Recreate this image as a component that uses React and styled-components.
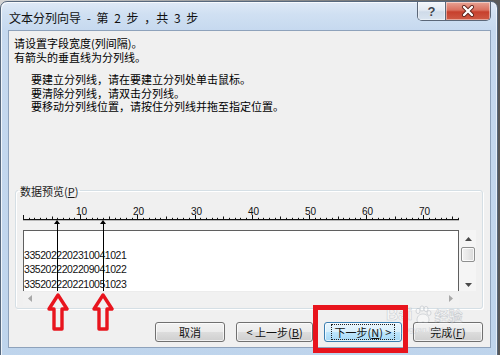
import React from "react";
import styled, { createGlobalStyle } from "styled-components";

const CJK = `"Noto Sans CJK SC", "Liberation Sans", sans-serif`;
const CHAR_W = 5.72;

const GlobalStyle = createGlobalStyle`
  html, body { margin: 0; padding: 0; }
  body {
    width: 500px; height: 355px; overflow: hidden;
    background: #5b5b5b;
    font-family: ${CJK};
  }
`;

const Stage = styled.div`
  position: relative;
  width: 500px;
  height: 355px;
  overflow: hidden;
  box-sizing: border-box;
  padding-top: 1px;
  background: linear-gradient(90deg, #d4d4d4 0%, #9c9c9c 45%, #585858 100%);
`;

const Window = styled.div`
  width: 498px;
  height: 372px;
  box-sizing: border-box;
  border: 1px solid #57687d;
  border-radius: 7px 7px 0 0;
  padding: 0 6px 0 7px;
  background: linear-gradient(180deg, #dfe9f6 0px, #d0e0f2 12px, #c6d9ef 28px, #bed4ec 100%);
  box-shadow: inset 1px 1px 0 rgba(255, 255, 255, 0.75), inset -1px 0 0 rgba(255, 255, 255, 0.6);
  display: flex;
  flex-direction: column;
`;

const TitleBar = styled.div`
  height: 28px;
  flex: none;
  display: flex;
  align-items: flex-start;
`;

const Title = styled.div`
  padding: 8px 0 0 1px;
  font-size: 12px;
  line-height: 15px;
  word-spacing: 3px;
  color: #111;
  white-space: pre;
`;

const Controls = styled.div`
  margin-left: auto;
  display: flex;
  height: 19px;
  border: 1px solid #5b6778;
  border-top: none;
  border-radius: 0 0 5px 5px;
  overflow: hidden;
  box-sizing: border-box;
`;

const CtrlButton = styled.div`
  width: ${(p) => p.$w}px;
  height: 100%;
  display: flex;
  align-items: center;
  justify-content: center;
  box-sizing: border-box;
  background: ${(p) =>
    p.$close
      ? "linear-gradient(180deg, #e8a394 0%, #d9705f 45%, #c7402d 55%, #cf5a45 100%)"
      : "linear-gradient(180deg, #f3f6fa 0%, #e3eaf3 45%, #cfdbe9 55%, #d9e4f0 100%)"};
  & + & { border-left: 1px solid #5b6778; }
  box-shadow: inset 0 0 0 1px rgba(255, 255, 255, 0.45);
`;

const HelpGlyph = styled.span`
  font-family: "Liberation Sans", sans-serif;
  font-weight: bold;
  font-size: 13px;
  color: #3d4450;
  text-shadow: 0 0 1px #fff;
  line-height: 1;
`;

const Panel = styled.div`
  height: 318px;
  flex: none;
  box-sizing: border-box;
  border: 1px solid #8ea2bb;
  background: #f0f0f0;
  display: flex;
  flex-direction: column;
  color: #000;
`;

const Intro = styled.div`
  padding: 5px 0 0 5px;
  font-size: 11px;
  line-height: 14px;
`;

const Steps = styled.div`
  margin: 9px 0 0 22px;
  font-size: 11px;
  line-height: 13.5px;
`;

const Group = styled.fieldset`
  margin: 71px 7px 0 6px;
  padding: 9px 5px 2px 7px;
  min-width: 0;
  border: 1px solid #d5dfe5;
  border-radius: 3px;
  box-shadow: inset 1px 1px 0 #fff, 1px 1px 0 #fff;
`;

const Legend = styled.legend`
  font-size: 11px;
  line-height: 12px;
  padding: 0 2px;
  margin-left: -5px;
  color: #1a1a1a;
`;

const U = styled.span`
  text-decoration: underline;
`;

const PreviewArea = styled.div`
  position: relative;
  display: flex;
  flex-direction: column;
  gap: 7px;
`;

const RulerSvg = styled.svg`
  display: block;
  width: 437px;
  height: 17px;
  overflow: visible;
`;

const PreviewGrid = styled.div`
  display: grid;
  grid-template-columns: 436px 17px;
  grid-template-rows: 61px 15px;
`;

const DataBox = styled.div`
  background: #fff;
  border: 1px solid #5f5f5f;
  border-bottom: none;
  box-sizing: border-box;
  padding: 17px 0 0 0;
  overflow: hidden;
  font-family: "Liberation Sans", sans-serif;
  font-size: 10.5px;
  letter-spacing: -0.45px;
  line-height: 14.5px;
  color: #111;
`;

const DataRow = styled.div`
  white-space: nowrap;
`;

const VScroll = styled.div`
  background: #f5f5f5;
  display: flex;
  flex-direction: column;
  align-items: center;
  padding: 7px 0 4px 1px;
  box-sizing: border-box;
`;

const Thumb = styled.div`
  width: 14px;
  height: 15px;
  margin: 6px 0 auto;
  box-sizing: border-box;
  border: 1px solid #8e8f8f;
  border-radius: 2px;
  background: linear-gradient(90deg, #f3f3f3 0%, #e8e8e8 50%, #d8d8d8 100%);
  box-shadow: inset 0 0 0 1px rgba(255, 255, 255, 0.8);
`;

const HScroll = styled.div`
  background: #f1f1f1;
  display: flex;
  align-items: center;
  justify-content: space-between;
  padding: 0 6px 0 5px;
  border-top: 1px solid #ececec;
`;

const Corner = styled.div`
  background: #f0f0f0;
`;

const Marker = styled.div`
  position: absolute;
  top: 14px;
  width: 7px;
  height: 71px;
  &::before {
    content: "";
    position: absolute;
    left: 0;
    top: 0;
    border-left: 3.5px solid transparent;
    border-right: 3.5px solid transparent;
    border-bottom: 4px solid #000;
  }
  &::after {
    content: "";
    position: absolute;
    left: 3px;
    top: 3px;
    bottom: 0;
    width: 1px;
    background: #000;
  }
`;

const ButtonRow = styled.div`
  margin-top: auto;
  display: flex;
  justify-content: flex-end;
  gap: 11px;
  padding: 0 7px 5px 0;
`;

const Button = styled.div`
  width: ${(p) => p.$w}px;
  height: 20px;
  box-sizing: border-box;
  display: flex;
  align-items: center;
  justify-content: center;
  font-size: 11px;
  color: #111;
  border-radius: 3px;
  border: 1px solid ${(p) => (p.$default ? "#3c7fb1" : "#707070")};
  background: ${(p) =>
    p.$default
      ? "linear-gradient(180deg, #eaf6fd 0%, #d9f0fc 50%, #bee6fd 50%, #a7d9f5 100%)"
      : "linear-gradient(180deg, #f2f2f2 0%, #ebebeb 50%, #dddddd 50%, #cfcfcf 100%)"};
  box-shadow: inset 0 0 0 1px rgba(255, 255, 255, 0.7);
`;

const Focus = styled.span`
  padding: 1px 3px;
  outline: 1px dotted #222;
  outline-offset: 0;
  line-height: 12px;
  white-space: nowrap;
`;

const Label = styled.span`
  white-space: nowrap;
`;

const RedArrow = styled.svg`
  position: absolute;
  width: 22px;
  height: 38px;
  top: 293px;
  left: ${(p) => p.$x}px;
`;

const RedBox = styled.div`
  position: absolute;
  left: 313px;
  top: 305px;
  width: 95px;
  height: 48px;
  box-sizing: border-box;
  border: 5px solid #e8141d;
`;

const Watermark = styled.div`
  position: absolute;
  left: 383px;
  top: 305px;
  display: flex;
  flex-direction: column;
  align-items: center;
  opacity: 0.45;
  pointer-events: none;
`;

const WmTop = styled.div`
  display: flex;
  align-items: center;
  gap: 1px;
  font-family: "Liberation Sans", sans-serif;
  font-weight: bold;
  font-size: 17px;
  line-height: 20px;
  color: #fff;
  -webkit-text-stroke: 0.6px #9aa3ad;
`;

const WmCn = styled.span`
  font-family: ${CJK};
  font-size: 14px;
  font-weight: bold;
`;

const WmUrl = styled.div`
  font-family: "Liberation Sans", sans-serif;
  font-size: 8px;
  color: #b8c0c8;
  line-height: 10px;
  margin-left: 18px;
`;

function Tri({ dir, color = "#4a4a4a" }) {
  const pts = {
    up: "0,4 3.5,0 7,4",
    down: "0,0 7,0 3.5,4",
    left: "4,0 4,7 0,3.5",
    right: "0,0 0,7 4,3.5",
  }[dir];
  const horiz = dir === "left" || dir === "right";
  return (
    <svg width={horiz ? 4 : 7} height={horiz ? 7 : 4} viewBox={horiz ? "0 0 4 7" : "0 0 7 4"}>
      <polygon points={pts} fill={color} />
    </svg>
  );
}

function Ruler() {
  const ticks = [];
  const labels = [];
  for (let i = 0; i <= 76; i++) {
    const x = Math.round(i * CHAR_W) + 0.5;
    const h = i % 10 === 0 ? 4 : i % 5 === 0 ? 2.5 : 1.2;
    ticks.push(<line key={i} x1={x} x2={x} y1={13 - h} y2={13} stroke="#111" strokeWidth="1" />);
    if (i % 10 === 0 && i > 0) {
      labels.push(
        <text
          key={"t" + i}
          x={x - 4.5}
          y={9}
          fontSize="10"
          fontFamily="Liberation Sans, sans-serif"
          fill="#111"
        >
          {i}
        </text>
      );
    }
  }
  return (
    <RulerSvg viewBox="0 0 437 17">
      <line x1="0" x2={Math.round(76 * CHAR_W) + 1} y1="13.6" y2="13.6" stroke="#111" strokeWidth="1.3" />
      {ticks}
      {labels}
    </RulerSvg>
  );
}

function CloseGlyph() {
  return (
    <svg width="14" height="12" viewBox="0 0 14 12">
      <path d="M3 2 L11 10 M11 2 L3 10" stroke="#5a2019" strokeWidth="4" strokeLinecap="round" />
      <path d="M3 2 L11 10 M11 2 L3 10" stroke="#fff" strokeWidth="2.4" strokeLinecap="round" />
    </svg>
  );
}

function Paw() {
  return (
    <svg width="20" height="20" viewBox="0 0 20 20">
      <g fill="#fff" stroke="#9aa3ad" strokeWidth="0.8">
        <ellipse cx="5" cy="6" rx="2" ry="2.6" />
        <ellipse cx="9" cy="3.5" rx="2" ry="2.6" />
        <ellipse cx="13" cy="4" rx="2" ry="2.6" />
        <ellipse cx="16" cy="8" rx="2" ry="2.4" />
        <path d="M4 15 C4 10 8 9 10 9 C13 9 16 11 16 15 C16 18 13 18 10 17 C7 18 4 18 4 15Z" />
      </g>
    </svg>
  );
}

const rows = ["3352022202310041021", "3352022202209041022", "3352022202210051023"];
const markers = [6, 14];

export default function App() {
  return (
    <>
      <GlobalStyle />
      <Stage>
        <Window>
          <TitleBar>
            <Title>文本分列向导 - 第 2 步 ，共 3 步</Title>
            <Controls>
              <CtrlButton $w={27}>
                <HelpGlyph>?</HelpGlyph>
              </CtrlButton>
              <CtrlButton $w={45} $close>
                <CloseGlyph />
              </CtrlButton>
            </Controls>
          </TitleBar>
          <Panel>
            <Intro>
              <div>请设置字段宽度(列间隔)。</div>
              <div>有箭头的垂直线为分列线。</div>
            </Intro>
            <Steps>
              <div>要建立分列线，请在要建立分列处单击鼠标。</div>
              <div>要清除分列线，请双击分列线。</div>
              <div>要移动分列线位置，请按住分列线并拖至指定位置。</div>
            </Steps>
            <Group>
              <Legend>
                数据预览(<U>P</U>)
              </Legend>
              <PreviewArea>
                <Ruler />
                <PreviewGrid>
                  <DataBox>
                    {rows.map((r) => (
                      <DataRow key={r}>{r}</DataRow>
                    ))}
                  </DataBox>
                  <VScroll>
                    <Tri dir="up" />
                    <Thumb />
                    <Tri dir="down" />
                  </VScroll>
                  <HScroll>
                    <Tri dir="left" color="#a8a8a8" />
                    <Tri dir="right" color="#a8a8a8" />
                  </HScroll>
                  <Corner />
                </PreviewGrid>
                {markers.map((m) => (
                  <Marker key={m} style={{ left: Math.round(m * CHAR_W) - 3 }} />
                ))}
              </PreviewArea>
            </Group>
            <ButtonRow>
              <Button $w={70}>
                <Label>取消</Label>
              </Button>
              <Button $w={77}>
                <Label>
                  &lt; 上一步(<U>B</U>)
                </Label>
              </Button>
              <Button $w={78} $default>
                <Focus>
                  下一步(<U>N</U>) &gt;
                </Focus>
              </Button>
              <Button $w={70}>
                <Label>
                  完成(<U>F</U>)
                </Label>
              </Button>
            </ButtonRow>
          </Panel>
        </Window>
        <Watermark>
          <WmTop>
            Bai
            <Paw />
            <WmCn>经验</WmCn>
          </WmTop>
          <WmUrl>jingyan.baidu.com</WmUrl>
        </Watermark>
        {[47, 92].map((x) => (
          <RedArrow key={x} $x={x} viewBox="0 0 22 38">
            <polygon
              points="11,2 20,16 15,16 15,36 7,36 7,16 2,16"
              fill="none"
              stroke="#e8141d"
              strokeWidth="3.4"
              strokeLinejoin="round"
            />
          </RedArrow>
        ))}
        <RedBox />
      </Stage>
    </>
  );
}
